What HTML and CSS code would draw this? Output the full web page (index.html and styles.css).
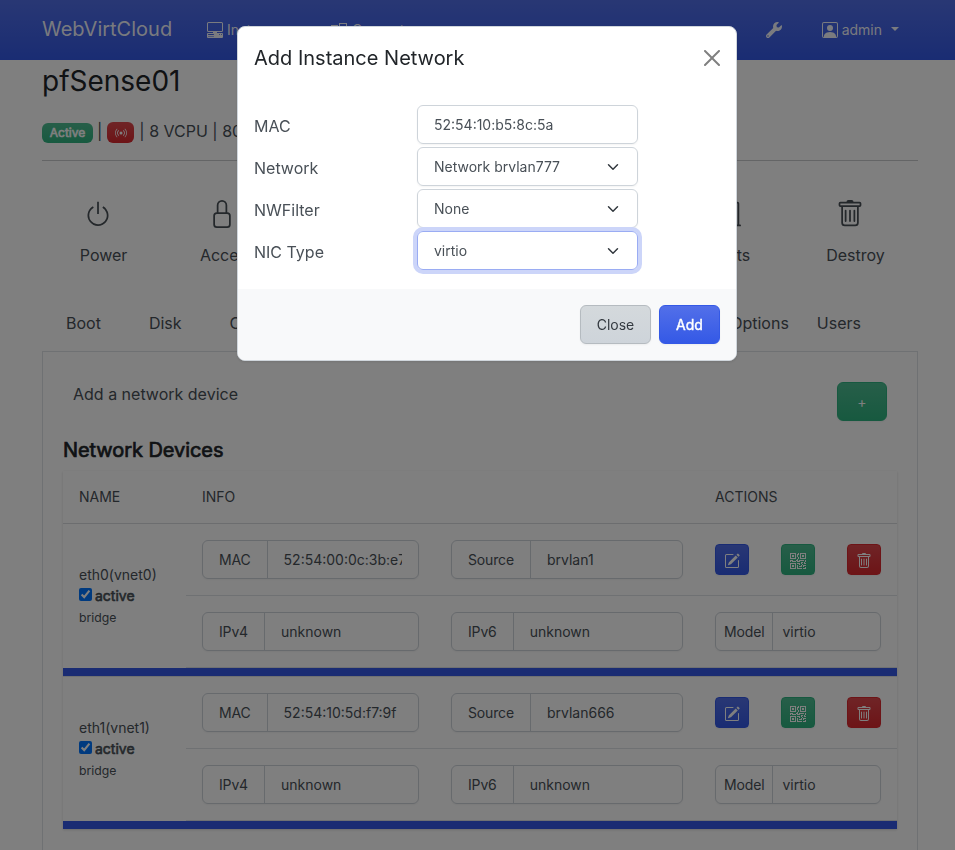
FILE: index.html
```html
<!DOCTYPE html>
<html lang="en">
<head>
<meta charset="utf-8">
<title>pfSense01 - WebVirtCloud</title>
<link rel="stylesheet" href="styles.css">
</head>
<body>
<svg class="defs" aria-hidden="true">
  <symbol id="pc" viewBox="0 0 16 16"><path d="M1.5 0A1.5 1.5 0 0 0 0 1.5v7A1.5 1.5 0 0 0 1.5 10H6v1H1a1 1 0 0 0-1 1v3a1 1 0 0 0 1 1h14a1 1 0 0 0 1-1v-3a1 1 0 0 0-1-1h-5v-1h4.500A1.500 1.500 0 0 0 16 8.500v-7A1.500 1.500 0 0 0 14.500 0h-13Zm0 1h13a.5.5 0 0 1 .5.5v7a.5.5 0 0 1-.5.5h-13a.5.5 0 0 1-.5-.5v-7a.5.5 0 0 1 .5-.5ZM12 12.500a.5.5 0 1 1 1 0 .5.5 0 0 1-1 0Zm2 0a.5.5 0 1 1 1 0 .5.5 0 0 1-1 0ZM1.500 12h5a.5.5 0 0 1 0 1h-5a.5.5 0 0 1 0-1ZM1 14.250a.25.25 0 0 1 .25-.25h5.500a.25.25 0 1 1 0 .5h-5.500a.25.25 0 0 1-.25-.25Z"/></symbol>
  <symbol id="computes" viewBox="0 0 16 16"><path d="M8 0h8v16H8zM9 1v2h6V1zM9 4v11h6V4zM0 2h7v1H1v8h6v1H0zM3 13h4v1H3z" fill-rule="evenodd"/></symbol>
  <symbol id="wrench" viewBox="0 0 512 512"><path d="M507.730 109.100c-2.240-9.030-13.540-12.090-20.120-5.510l-74.360 74.360-67.880-11.310-11.310-67.880 74.360-74.360c6.620-6.620 3.430-17.900-5.660-20.160-47.380-11.740-99.550.91-136.580 37.930-39.640 39.640-50.550 97.100-34.050 147.200L18.740 402.760c-24.990 24.990-24.990 65.510 0 90.500 24.990 24.990 65.510 24.990 90.500 0l213.210-213.210c50.120 16.710 107.470 5.680 147.370-34.220 37.070-37.070 49.700-89.320 37.910-136.730zM64 472c-13.250 0-24-10.750-24-24 0-13.260 10.750-24 24-24s24 10.740 24 24c0 13.250-10.750 24-24 24z"/></symbol>
  <symbol id="person" viewBox="0 0 16 16"><path d="M11 6a3 3 0 1 1-6 0 3 3 0 0 1 6 0z"/><path d="M2 0a2 2 0 0 0-2 2v12a2 2 0 0 0 2 2h12a2 2 0 0 0 2-2V2a2 2 0 0 0-2-2H2zm12 1a1 1 0 0 1 1 1v12a1 1 0 0 1-1 1v-1c0-1-1-4-6-4s-6 3-6 4v1a1 1 0 0 1-1-1V2a1 1 0 0 1 1-1h12z"/></symbol>
  <symbol id="broadcast" viewBox="0 0 16 16"><path d="M3.050 3.050a7 7 0 0 0 0 9.900.5.5 0 0 1-.707.707 8 8 0 0 1 0-11.314.5.5 0 0 1 .707.707zm2.122 2.122a4 4 0 0 0 0 5.656.5.5 0 1 1-.708.708 5 5 0 0 1 0-7.072.5.5 0 0 1 .708.708zm5.656-.708a.5.5 0 0 1 .708 0 5 5 0 0 1 0 7.072.5.5 0 1 1-.708-.708 4 4 0 0 0 0-5.656.5.5 0 0 1 0-.708zm2.122-2.120a.5.5 0 0 1 .707 0 8 8 0 0 1 0 11.313.5.5 0 0 1-.707-.707 7 7 0 0 0 0-9.900.5.5 0 0 1 0-.707zM10 8a2 2 0 1 1-4 0 2 2 0 0 1 4 0z"/></symbol>
  <symbol id="power" viewBox="0 0 16 16"><path d="M7.500 1v7h1V1h-1z"/><path d="M3 8.812a4.999 4.999 0 0 1 2.578-4.375l-.485-.874A6 6 0 1 0 11 3.616l-.501.865A5 5 0 1 1 3 8.812z"/></symbol>
  <symbol id="lock" viewBox="0 0 16 16"><path d="M8 1a2 2 0 0 1 2 2v4H6V3a2 2 0 0 1 2-2zm3 6V3a3 3 0 0 0-6 0v4a2 2 0 0 0-2 2v5a2 2 0 0 0 2 2h6a2 2 0 0 0 2-2V9a2 2 0 0 0-2-2zM5 8h6a1 1 0 0 1 1 1v5a1 1 0 0 1-1 1H5a1 1 0 0 1-1-1V9a1 1 0 0 1 1-1z"/></symbol>
  <symbol id="chart" viewBox="0 0 16 16"><path d="M11 2a1 1 0 0 1 1-1h2a1 1 0 0 1 1 1v12h.5a.5.5 0 0 1 0 1H.5a.5.5 0 0 1 0-1H1v-3a1 1 0 0 1 1-1h2a1 1 0 0 1 1 1v3h1V7a1 1 0 0 1 1-1h2a1 1 0 0 1 1 1v7h1V2zm1 12h2V2h-2v12zm-3 0V7H7v7h2zm-5 0v-3H2v3h2z"/></symbol>
  <symbol id="trash" viewBox="0 0 16 16"><path d="M5.500 5.500A.5.5 0 0 1 6 6v6a.5.5 0 0 1-1 0V6a.5.5 0 0 1 .5-.5zm2.500 0a.5.5 0 0 1 .5.5v6a.5.5 0 0 1-1 0V6a.5.5 0 0 1 .5-.5zm3 .5a.5.5 0 0 0-1 0v6a.5.5 0 0 0 1 0V6z"/><path fill-rule="evenodd" d="M14.500 3a1 1 0 0 1-1 1H13v9a2 2 0 0 1-2 2H5a2 2 0 0 1-2-2V4h-.5a1 1 0 0 1-1-1V2a1 1 0 0 1 1-1H6a1 1 0 0 1 1-1h2a1 1 0 0 1 1 1h3.500a1 1 0 0 1 1 1v1zM4.118 4 4 4.059V13a1 1 0 0 0 1 1h6a1 1 0 0 0 1-1V4.059L11.882 4H4.118zM2.500 3V2h11v1h-11z"/></symbol>
  <symbol id="pencil" viewBox="0 0 16 16"><path d="M15.502 1.940a.5.5 0 0 1 0 .706L14.459 3.690l-2-2L13.502.646a.5.5 0 0 1 .707 0l1.293 1.293zm-1.750 2.456-2-2L4.939 9.210a.5.5 0 0 0-.121.196l-.805 2.414a.25.25 0 0 0 .316.316l2.414-.805a.5.5 0 0 0 .196-.12l6.813-6.814z"/><path fill-rule="evenodd" d="M1 13.500A1.500 1.500 0 0 0 2.500 15h11a1.500 1.500 0 0 0 1.500-1.500v-6a.5.5 0 0 0-1 0v6a.5.5 0 0 1-.5.5h-11a.5.5 0 0 1-.5-.5v-11a.5.5 0 0 1 .5-.5H9a.5.5 0 0 0 0-1H2.500A1.500 1.500 0 0 0 1 2.500v11z"/></symbol>
  <symbol id="qr" viewBox="0 0 16 16"><path d="M2 2h2v2H2V2Z"/><path d="M6 0v6H0V0h6ZM5 1H1v4h4V1ZM4 12H2v2h2v-2Z"/><path d="M6 10v6H0v-6h6Zm-5 1v4h4v-4H1Zm11-9h2v2h-2V2Z"/><path d="M10 0v6h6V0h-6Zm5 1v4h-4V1h4ZM8 1V0h1v2H8v2H7V1h1Zm0 5V4h1v2H8ZM6 8V7h1V6h1v2h1V7h5v1h-4v1H7V8H6Zm0 0v1H2V8H1v1H0V7h3v1h3Zm10 1h-1V7h1v2Zm-1 0h-1v2h2v-1h-1V9Zm-4 0h2v1h-1v1h-1V9Zm2 3v-1h-1v1h-1v1H9v1h3v-2h1Zm0 0h3v1h-2v1h-1v-2Zm-4-1v1h1v-2H7v1h2Z"/><path d="M7 12h1v3h4v1H7v-4Zm9 2v2h-3v-1h2v-1h1Z"/></symbol>
  <symbol id="chevron" viewBox="0 0 16 16"><path fill="none" stroke="#343a40" stroke-linecap="round" stroke-linejoin="round" stroke-width="2" d="m2 5 6 6 6-6"/></symbol>
  <symbol id="close" viewBox="0 0 16 16"><path d="M.293.293a1 1 0 0 1 1.414 0L8 6.586 14.293.293a1 1 0 1 1 1.414 1.414L9.414 8l6.293 6.293a1 1 0 0 1-1.414 1.414L8 9.414l-6.293 6.293a1 1 0 0 1-1.414-1.414L6.586 8 .293 1.707a1 1 0 0 1 0-1.414z"/></symbol>
</svg>

<nav class="navbar">
  <a class="brand">WebVirtCloud</a>
  <a class="navlink instances"><svg class="icon"><use href="#pc"/></svg><span>Instances</span></a>
  <a class="navlink computes"><svg class="icon"><use href="#computes"/></svg><span>Computes</span></a>
  <a class="navlink tools"><svg class="icon"><use href="#wrench"/></svg></a>
  <a class="navlink user"><svg class="icon"><use href="#person"/></svg><span>admin</span><i class="caret"></i></a>
</nav>

<main class="container">
  <h3 class="title">pfSense01</h3>
  <div class="status">
    <span class="badge success">Active</span><span>|</span>
    <span class="badge danger"><svg><use href="#broadcast"/></svg></span><span class="specs">| 8 VCPU | 80</span>
  </div>
  <hr>
  <div class="actions">
    <a><svg><use href="#power"/></svg><span>Power</span></a>
    <a class="access"><svg><use href="#lock"/></svg><span>Access</span></a>
    <a></a><a></a><a></a>
    <a class="stats"><svg><use href="#chart"/></svg><span>Stats</span></a>
    <a class="destroy"><svg><use href="#trash"/></svg><span>Destroy</span></a>
  </div>
  <div class="tabs"><a>Boot</a><a>Disk</a><a>CD-ROM</a><a class="push">Options</a><a>Users</a></div>

  <section class="panel">
    <div class="add-row"><span>Add a network device</span><button class="btn success">+</button></div>
    <h5>Network Devices</h5>
    <div class="devices">
      <div class="head"><span>NAME</span><span>INFO</span><span></span><span>ACTIONS</span></div>

      <div class="device">
        <div class="name"><span>eth0(vnet0)</span><label><input type="checkbox" checked><b>active</b></label><small>bridge</small></div>
        <div class="cell"><div class="group"><span>MAC</span><input value="52:54:00:0c:3b:e7"></div></div>
        <div class="cell"><div class="group"><span>Source</span><input value="brvlan1"></div></div>
        <div class="cell buttons"><button class="btn sm primary"><svg><use href="#pencil"/></svg></button><button class="btn sm success"><svg><use href="#qr"/></svg></button><button class="btn sm danger"><svg><use href="#trash"/></svg></button></div>
        <div class="cell"><div class="group"><span>IPv4</span><input value="unknown"></div></div>
        <div class="cell"><div class="group"><span>IPv6</span><input value="unknown"></div></div>
        <div class="cell"><div class="group tight"><span>Model</span><input value="virtio"></div></div>
      </div>
      <div class="bar"></div>

      <div class="device">
        <div class="name"><span>eth1(vnet1)</span><label><input type="checkbox" checked><b>active</b></label><small>bridge</small></div>
        <div class="cell"><div class="group"><span>MAC</span><input value="52:54:10:5d:f7:9f"></div></div>
        <div class="cell"><div class="group"><span>Source</span><input value="brvlan666"></div></div>
        <div class="cell buttons"><button class="btn sm primary"><svg><use href="#pencil"/></svg></button><button class="btn sm success"><svg><use href="#qr"/></svg></button><button class="btn sm danger"><svg><use href="#trash"/></svg></button></div>
        <div class="cell"><div class="group"><span>IPv4</span><input value="unknown"></div></div>
        <div class="cell"><div class="group"><span>IPv6</span><input value="unknown"></div></div>
        <div class="cell"><div class="group tight"><span>Model</span><input value="virtio"></div></div>
      </div>
      <div class="bar last"></div>
    </div>
  </section>
</main>

<div class="backdrop">
  <div class="modal" role="dialog">
    <div class="modal-header"><h5>Add Instance Network</h5><svg class="x"><use href="#close"/></svg></div>
    <div class="modal-body">
      <div class="field"><label>MAC</label><div class="control">52:54:10:b5:8c:5a</div></div>
      <div class="field"><label>Network</label><div class="control">Network brvlan777<svg><use href="#chevron"/></svg></div></div>
      <div class="field"><label>NWFilter</label><div class="control">None<svg><use href="#chevron"/></svg></div></div>
      <div class="field"><label>NIC Type</label><div class="control focus">virtio<svg><use href="#chevron"/></svg></div></div>
    </div>
    <div class="modal-footer"><button class="btn secondary">Close</button><button class="btn primary">Add</button></div>
  </div>
</div>
</body>
</html>
```
FILE: styles.css
```css
* { box-sizing: border-box; }
html, body { height: 850px; overflow: hidden; }
body { margin: 0; display: flex; flex-direction: column; background: #fff; color: #495057; font: 390 16px/1.5 Inter, "Liberation Sans", sans-serif; }
svg { fill: currentColor; display: block; flex: none; }
.defs { display: none; }
h3, h5 { margin: 0; font-weight: 370; color: #212529; }
input, button { font: inherit; color: inherit; }

.navbar { flex: none; height: 60px; padding: 0 42px; display: flex; align-items: center; color: rgba(255,255,255,.95); background: linear-gradient(180deg, #526fe9, #3459e6); }
.brand { font-size: 20px; line-height: 30px; margin-bottom: 3px; width: 165px; }
.navlink { display: flex; align-items: center; gap: 4px; font-size: 14px; line-height: 21px; }
.navlink span { margin-bottom: 2px; }
.icon { width: 16px; height: 16px; }
.instances { width: 124px; }
.computes .icon { margin-bottom: -1px; margin-right: 1px; }
.tools { margin-left: auto; margin-right: 40px; }
.user { margin-right: 14px; }
.caret { border: 4px solid transparent; border-top-color: currentColor; border-bottom: 0; margin: 0 0 3px 5px; }

.container { flex: 1; min-height: 0; display: flex; flex-direction: column; padding: 0 37px 0 42px; }
.container > * { flex: none; }
.title { font-size: 28px; line-height: 34px; padding-top: 4px; }
.status { display: flex; align-items: center; height: 30px; margin-top: 18px; gap: 4px; }
.badge { border-radius: 6px; color: #fff; height: 20px; display: flex; align-items: center; padding: 0 7px; font-size: 12px; line-height: 12px; margin-top: 3px; }
.badge.success { -webkit-text-stroke: .6px; width: 51px; justify-content: center; }
.badge.danger { height: 21px; padding: 0 7.5px; margin-left: 1px; }
.badge svg { width: 12px; height: 12px; }
.success { background: linear-gradient(180deg, #4ebd92, #2fb380); }
.danger { background: linear-gradient(180deg, #df484d, #da292e); }
.primary { background: linear-gradient(180deg, #526fe9, #3459e6); }
.specs { margin-left: 1px; }
hr { width: 876px; border: 0; height: 1px; background: #c8cacc; margin: 14px 0 0; }

.actions { width: 876px; display: grid; grid-template-columns: repeat(7, 1fr); height: 130px; }
.actions a { display: flex; flex-direction: column; align-items: center; padding: 39px 2px 0 0; }
.actions svg { width: 28px; height: 28px; margin-right: 11px; color: #495057; }
.actions span { margin-top: 15px; }
.actions .access { padding-right: 4px; }
.actions .stats { padding: 39px 0 0 2px; }
.actions .stats svg { margin-right: 8px; }
.actions .destroy { padding-right: 0; }
.tabs { width: 876px; height: 60px; display: flex; align-items: center; padding: 3px 33px 0 0; }
.tabs a { padding: 0 24px; }
.tabs .push { margin-left: auto; margin-right: -20px; }

.panel { width: 876px; border: 1px solid #dee2e6; border-bottom: 0; padding: 30px 20px 0; height: 499px; }
.add-row { display: flex; justify-content: space-between; padding: 0 10px; height: 39px; line-height: 25px; }
.panel h5 { font-size: 20px; line-height: 24px; margin: 17px 0 9px; letter-spacing: -.07px; -webkit-text-stroke: .7px; }
.btn { border: 1px solid; border-radius: 6px; padding: 8px 16px; height: 39px; font-size: 14px; line-height: 21px; color: #fff; box-shadow: 0 1px 2px rgba(0,0,0,.05); display: flex; align-items: center; justify-content: center; }
.btn.success { border-color: #2fb380; }
.btn.danger { border-color: #da292e; }
.btn.primary { border-color: #3459e6; }
.btn.secondary { color: #343a40; border-color: #b5bbc0; background: linear-gradient(180deg, #d4d9dc, #ced4da); }
.add-row .btn { width: 50px; }
.btn.sm { width: 34px; height: 31px; padding: 0; border-radius: 4px; }
.btn.sm svg { width: 16px; height: 16px; margin-top: 2px; }

.devices { width: 834px; box-shadow: 0 1px 3px rgba(0,0,0,.1), 0 1px 2px rgba(0,0,0,.06); font-size: 14px; line-height: 21px; }
.head, .device { display: grid; grid-template-columns: 123px 249px 264px 198px; }
.head { height: 53px; align-items: center; padding-bottom: 1px; border-bottom: 1px solid #d8dbde; }
.head span { padding-left: 16px; }
.device { grid-template-rows: 72px 72px; }
.name { grid-row: span 2; display: flex; flex-direction: column; justify-content: center; padding-left: 16px; }
.name label { display: flex; align-items: center; gap: 3px; }
.name b { font-weight: 370; -webkit-text-stroke: .6px; }
.name input { width: 13px; height: 13px; margin: 0 0 2px; accent-color: #0075ff; }
.name small { font-size: 12.25px; line-height: 22px; padding-top: 1px; }
.cell { padding: 16px; border-bottom: 1px solid #dee2e6; min-width: 0; }
.group { display: flex; height: 39px; border: 1px solid #ced4da; border-radius: 6px; overflow: hidden; box-shadow: 0 1px 2px rgba(0,0,0,.05); }
.group span { padding: 8px 16px; border-right: 1px solid #ced4da; letter-spacing: -.15px; }
.group input { flex: 1; min-width: 0; width: 0; border: 0; padding: 0; margin: 0 16px; background: none; outline: 0; }
.group.tight span { padding: 8px; }
.group.tight input { margin: 0 9px; }
.buttons { display: flex; justify-content: space-between; align-items: center; }
.bar { height: 9px; background: #3459e6; border-bottom: 1px solid #dee2e6; }
.bar.last { border-bottom: 0; height: 8px; }

.backdrop { position: fixed; inset: 0; background: rgba(0,0,0,.5); padding-top: 26px; }
.modal { width: 500px; margin-left: 237px; background: #fff; border: 1px solid #d0d6dc; border-radius: 8px; overflow: hidden; box-shadow: 0 1px 3px rgba(0,0,0,.1); }
.modal-header { display: flex; align-items: center; justify-content: space-between; padding: 16px; height: 62px; }
.modal-header h5 { font-size: 20px; line-height: 30px; }
.x { width: 16px; height: 16px; color: #808080; }
.modal-body { padding: 16px; height: 200px; display: flex; flex-direction: column; gap: 3px; }
.field { display: grid; grid-template-columns: 163px 221px; height: 39px; }
.field label { padding-top: 9px; }
.control { height: 39px; border: 1px solid #ced4da; border-radius: 6px; padding: 0 16px; font-size: 14px; display: flex; align-items: center; justify-content: space-between; box-shadow: 0 1px 2px rgba(0,0,0,.05); }
.control svg { width: 12px; height: 12px; margin-right: 2px; }
.control.focus { border-color: #9aacf3; box-shadow: 0 0 0 4px #ccd5f9; }
.modal-footer { height: 71px; padding: 0 16px; background: #f8f9fa; display: flex; justify-content: flex-end; align-items: center; gap: 8px; }
.modal-footer .secondary { width: 71px; }
.modal-footer .primary { width: 61px; -webkit-text-stroke: .4px; }
```
